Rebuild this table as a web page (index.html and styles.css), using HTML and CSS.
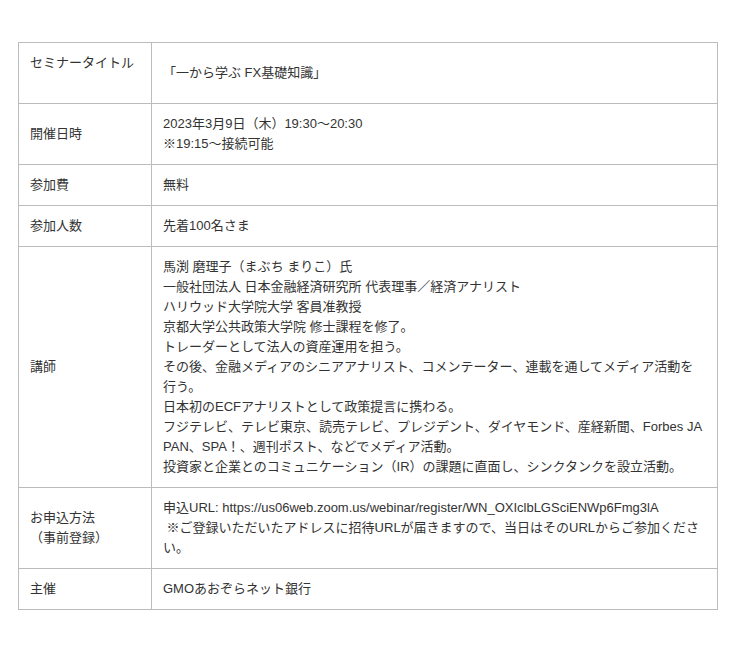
FILE: index.html
```html
<!DOCTYPE html>
<html lang="ja">
<head>
<meta charset="utf-8">
<title>セミナー概要</title>
<link rel="stylesheet" href="styles.css">
</head>
<body>
<div class="page">
  <table class="info">
    <colgroup>
      <col class="col-head">
      <col class="col-body">
    </colgroup>
    <tbody>
      <tr>
        <th>セミナータイトル<br>&nbsp;</th>
        <td>「一から学ぶ FX基礎知識」</td>
      </tr>
      <tr>
        <th>開催日時</th>
        <td>2023年3月9日（木）19:30～20:30<br>※19:15～接続可能</td>
      </tr>
      <tr>
        <th>参加費</th>
        <td>無料</td>
      </tr>
      <tr>
        <th>参加人数</th>
        <td>先着100名さま</td>
      </tr>
      <tr>
        <th>講師</th>
        <td>馬渕 磨理子（まぶち まりこ）氏<br>一般社団法人 日本金融経済研究所 代表理事／経済アナリスト<br>ハリウッド大学院大学 客員准教授<br>京都大学公共政策大学院 修士課程を修了。<br>トレーダーとして法人の資産運用を担う。<br>その後、金融メディアのシニアアナリスト、コメンテーター、連載を通してメディア活動を行う。<br>日本初のECFアナリストとして政策提言に携わる。<br>フジテレビ、テレビ東京、読売テレビ、プレジデント、ダイヤモンド、産経新聞、Forbes JAPAN、SPA！、週刊ポスト、などでメディア活動。<br>投資家と企業とのコミュニケーション（IR）の課題に直面し、シンクタンクを設立活動。</td>
      </tr>
      <tr>
        <th>お申込方法<br>（事前登録）</th>
        <td>申込URL: https://us06web.zoom.us/webinar/register/WN_OXIclbLGSciENWp6Fmg3lA<br>&nbsp;※ご登録いただいたアドレスに招待URLが届きますので、当日はそのURLからご参加ください。</td>
      </tr>
      <tr>
        <th>主催</th>
        <td>GMOあおぞらネット銀行</td>
      </tr>
    </tbody>
  </table>
</div>
</body>
</html>
```

FILE: styles.css
```css
html, body {
  margin: 0;
  padding: 0;
  background: #ffffff;
}

.page {
  padding: 42px 22px 0 18px;
  font-family: "Liberation Sans", "Noto Sans CJK JP", sans-serif;
  font-size: 13px;
  color: #333333;
}

.info {
  width: 700px;
  border-collapse: collapse;
  table-layout: fixed;
}

.col-head {
  width: 133px;
}

.info th,
.info td {
  border: 1px solid #bcbcbc;
  padding: 10px 11px;
  line-height: 20px;
  text-align: left;
  vertical-align: middle;
  font-weight: normal;
  word-break: break-all;
}
```
